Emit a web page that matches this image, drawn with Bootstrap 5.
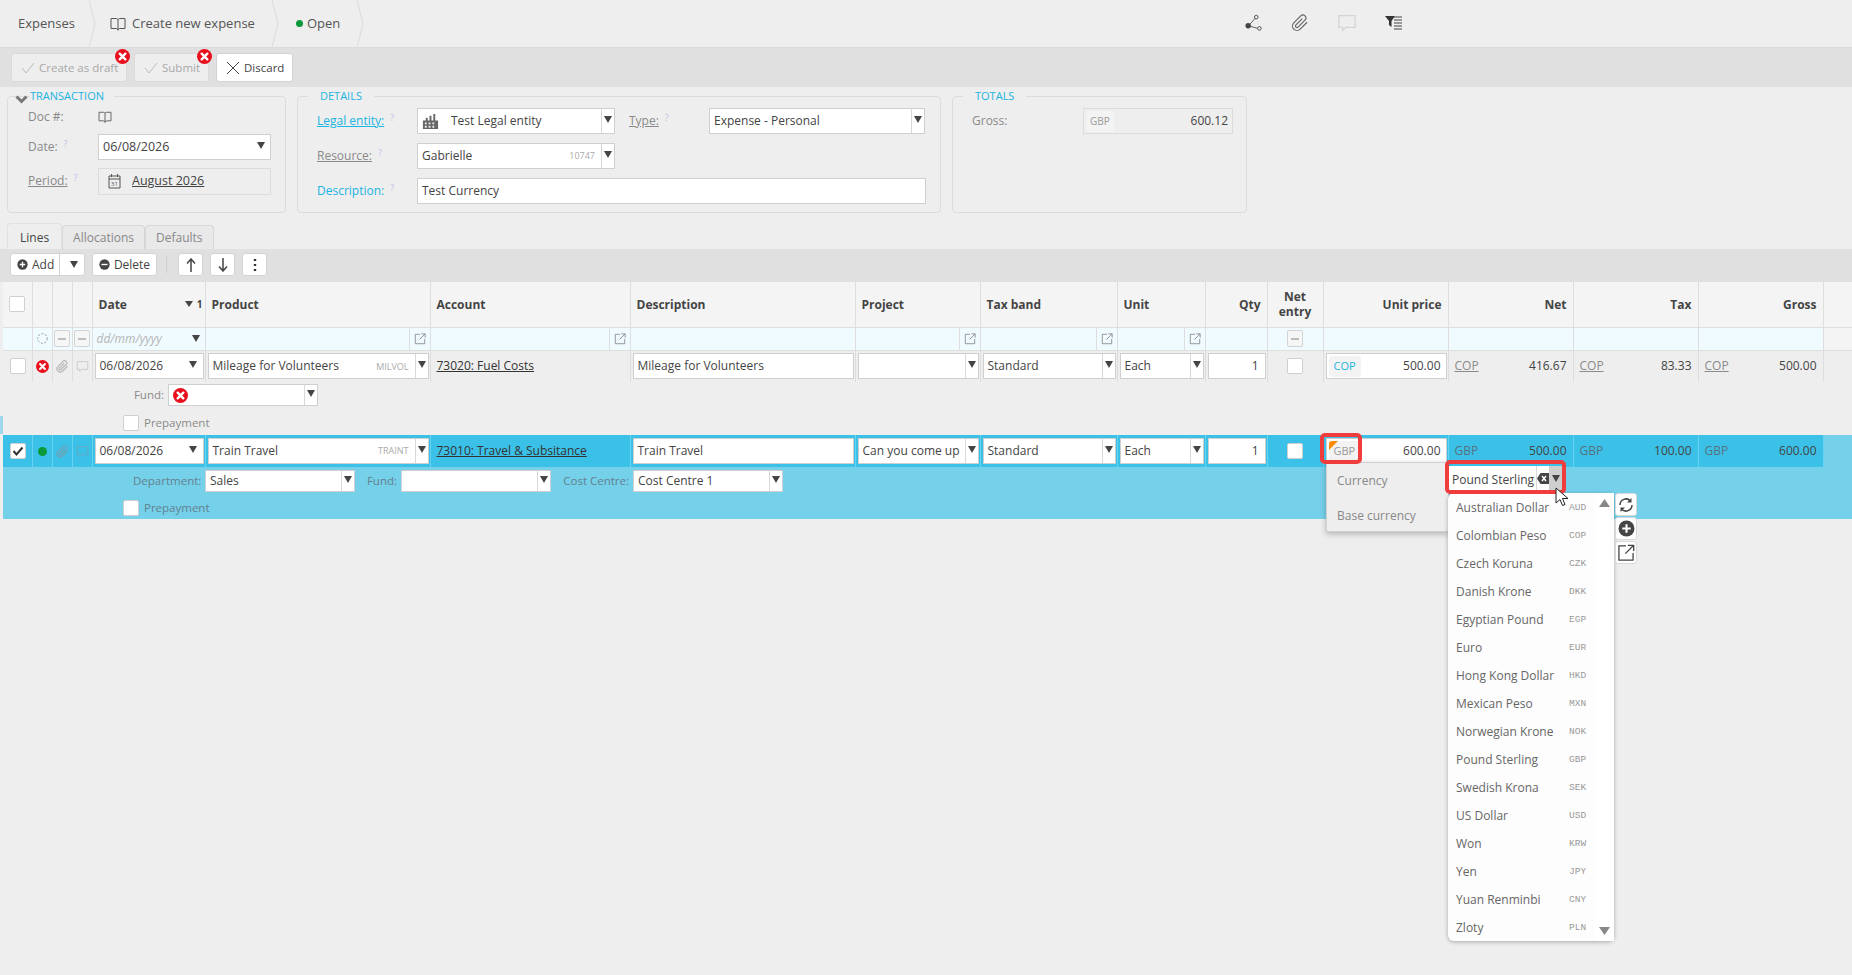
<!DOCTYPE html>
<html lang="en">
<head>
<meta charset="UTF-8">
<title>Create new expense</title>
<link href="https://cdn.jsdelivr.net/npm/bootstrap@5.3.0/dist/css/bootstrap.min.css" rel="stylesheet">
<script src="https://cdn.jsdelivr.net/npm/bootstrap@5.3.0/dist/js/bootstrap.bundle.min.js"></script>
<style>
html, body { height: 975px; overflow: hidden; }
body { background: #eeeeee; color: #444; font-family: "Open Sans", "Noto Sans", sans-serif; font-size: 12px; }
.pg { position: relative; width: 1852px; height: 975px; overflow: hidden; }
.ico { display: inline-block; flex: none; }
.tri { display: inline-block; width: 0; height: 0; border-left: 4px solid transparent; border-right: 4px solid transparent; border-top: 7px solid #444; }
.clip-top { stroke-width: 1.600; }
.clip-s { stroke-width: 2.500; }

/* top crumb bar */
.crumbs { height: 47px; padding-left: 2px; }
.crumb { font-size: 13px; color: #555; display: flex; align-items: center; gap: 6px; }
.crumb-sep { display: block; flex: none; }
.topicons { position: absolute; top: 13px; left: 1245px; display: flex; gap: 28px; }
.topicons svg { display: block; }

/* toolbars */
.bar1 { height: 40px; background: #e0e0e0; border-top: 1px solid #dcdcdc; padding: 5px 0 0 11px; gap: 7px; }
.tbtn { position: relative; display: flex; align-items: center; gap: 4px; height: 29px; padding: 0 0 0 9px; background: #fff; border: 1px solid #d2d2d2; border-radius: 3px; font-size: 11.500px; color: #444; }
.tbtn.off { background: #eeeeee; border-color: #dadada; color: #a8a8a8; }
.errdot { position: absolute; top: -5px; right: -4px; }

/* fieldsets */
.boxes { padding-left: 7px; margin-top: 1px; gap: 11px; }
.fbox { position: relative; height: 125px; border: 1px solid #dcdcdc; border-radius: 4px; min-width: 0; padding: 0; }
.fbox legend { float: none; width: auto; font-size: 11px; line-height: 16px; color: #1cb4e2; margin: 0 0 0 10px; padding: 0 12px; text-transform: uppercase; }
.fbox.t1 { width: 279px; } .fbox.t1 legend { margin-left: 22px; padding: 0 10px 0 0; }
.fbox.t2 { width: 644px; }
.fbox.t3 { width: 295px; }
.fin { padding: 4px 0 0 19px; }
.foldmark { position: absolute; top: -9px; left: 7px; }
.frow { display: flex; align-items: center; height: 26px; }
.frow.gapd { margin-top: 9px; }
.flab { color: #8a8a8a; font-size: 12px; flex: none; }
.flab.act { color: #1cb4e2; }
.flab.blue { color: #1cb4e2; }
.flab sup { color: #cdb8e6; font-size: 9px; margin-left: 6px; }
.fld { display: flex; align-items: center; height: 26px; background: #fff; border: 1px solid #cfcfcf; color: #444; font-size: 12px; min-width: 0; }
.fld.ro { background: #eeeeee; border-color: #dcdcdc; }
.fld.big { font-size: 12.500px; }
.fld-tx { flex: 1 1 auto; padding-left: 4px; white-space: nowrap; overflow: hidden; min-width: 0; }
.fld-code { font-size: 9px; color: #aaa; padding-right: 6px; flex: none; }
.fld-drop { flex: none; width: 13px; align-self: stretch; border-left: 1px solid #d8d8d8; display: flex; align-items: center; justify-content: center; }
.fld-drop.bare { border-left: 0; width: 19px; }
.fld-drop .tri { margin-top: -3px; }
.moneytag { font-size: 10px; color: #999; background: #f3f3f3; border-radius: 3px; padding: 3px 4px; margin-left: 2px; }

/* tabs */
.tabs { margin-top: 9px; padding-left: 7px; height: 27px; border-bottom: 1px solid #d6d6d6; align-items: flex-end; }
.tabs .nav-link { height: 24px; padding: 0 10px; margin: 0; line-height: 24px; font-size: 12px; color: #888; background: #e9e9e9; border: 1px solid #d6d6d6; border-bottom: 0; border-radius: 4px 4px 0 0; }
.tabs .nav-link.active { height: 26px; line-height: 27px; padding: 0 12px; color: #444; background: #eeeeee; }
.bar2 { height: 33px; background: #e0e0e0; padding: 4px 0 0 10px; }
.mbtn { display: flex; align-items: center; justify-content: center; gap: 4px; height: 23px; background: #fff; border: 1px solid #d2d2d2; border-radius: 3px; font-size: 12px; color: #444; padding: 0; }
.vline { width: 1px; height: 17px; background: #cfcfcf; margin: 3px 0 0 9px; }

/* grid */
.ln-grid { --bs-table-bg: transparent; --bs-table-color: #444; width: 1849px; margin: 0 0 0 3px; table-layout: fixed; border-collapse: collapse; }
.ln-grid td, .ln-grid th { padding: 0; border: 0; vertical-align: middle; font-size: 12px; }
.hd-row th { height: 45px; background: #f4f4f4; font-weight: 700; color: #444; padding: 0 6px; border-right: 1px solid #dedede; border-bottom: 1px solid #dedede; line-height: 15px; }
.sorty { margin-right: -4px; }
.flt-row td { height: 23px; background: #effbff; border-right: 1px solid #dedede; border-bottom: 1px solid #dedede; }
.flt-row td:last-child { background: #f4f4f4; border-right: 0; }
.hd-row th:last-child { border-right: 0; }
.flt-cell { display: flex; align-items: center; justify-content: flex-end; height: 22px; }
.flt-btn { width: 21px; height: 22px; border-left: 1px solid #dedede; display: flex; align-items: center; justify-content: center; }
.ph { color: #b5b5b5; font-style: italic; padding-left: 4px; margin-right: auto; }
.dashbox { width: 16px; height: 17px; border: 1px solid #d4d4d4; border-radius: 2px; background: #f6f6f6; display: block; margin: 0 auto; position: relative; }
.dashbox::after { content: ""; position: absolute; left: 3px; right: 3px; top: 7px; height: 2px; background: #bdbdbd; }
.tick { display: block; width: 16px; height: 16px; background: #fff; border: 1px solid #cfcfcf; border-radius: 2px; margin: 0 auto; }
.line-row td { height: 32px; border-right: 1px solid #dedede; }
.line-row td:last-child { border-right: 0; }
.line-row td:first-child .tick { margin-left: 7px; }
.line-row.sel td { background: #3bc1e8; border-right-color: #66d2ef; }
.line-row.sel td:last-child { background: #75d0ea; }
.sub-row td.sub-cell { height: 53px; padding-top: 2px; }
.sub-row.sel td.sub-cell { background: #75d0ea; height: 52px; padding-top: 3px; }
.cellfld { margin: 0 1px 0 2px; }
.cico { display: flex; justify-content: center; align-items: center; }
.alink { color: #333; text-decoration: underline; padding-left: 6px; }
.amt { display: flex; justify-content: space-between; padding: 0 6px; }
.amt u { color: #8a8a8a; }
.sel .amt span:first-child { color: #55737f; }
.qty { justify-content: flex-end; padding-right: 6px; }
.subline { display: flex; align-items: center; height: 22px; gap: 4px; padding-left: 130px; }
.subline .flab { text-align: right; font-size: 11.500px; white-space: nowrap; }
.subfld { height: 22px; width: 150px; }
.lab-fund0 { width: 31px; }
.lab-dept { width: 68px; }
.lab-fund { width: 34px; margin-left: 4px; }
.lab-cost { width: 70px; margin-left: 4px; }
.subline.opt { height: 16px; margin-top: 9px; padding-left: 120px; gap: 5px; }
.sel .subline.opt { margin-top: 8px; }
.sel .flab { color: #63818e; }
.badge-tag { font-size: 11px; background: #f3f3f3; color: #1cb4e2; border-radius: 3px; padding: 2px 5px; margin-left: 2px; position: relative; }
.sel .badge-tag { color: #999; overflow: hidden; }
.sel .badge-tag::before { content: ""; position: absolute; left: 0; top: 0; border-top: 9px solid #ff8a00; border-right: 9px solid transparent; }
.price-tx { margin-left: auto; padding-right: 5px; }

/* popup over the grid */
.cur-pop { position: absolute; left: 1326px; top: 462px; width: 123px; height: 70px; background: #eeeeee; border: 1px solid #d0d0d0; box-shadow: 0 2px 6px rgba(0,0,0,.25); padding: 9px 10px; color: #888; }
.cur-pop div { height: 35px; }
.cur-fld { position: absolute; left: 1448px; top: 466px; width: 114px; height: 25px; background: #fff; display: flex; align-items: center; }
.cur-fld .tx { flex: 1; padding: 2px 0 0 4px; font-size: 12px; color: #444; white-space: nowrap; overflow: hidden; }
.cur-x { flex: none; width: 13px; height: 25px; border-left: 1px solid #d8d8d8; display: flex; align-items: center; }
.cur-dd { flex: none; width: 13px; height: 25px; background: #cfcfcf; display: flex; align-items: center; justify-content: center; }
.redmark { position: absolute; border: 4px solid #ef3d3d; border-radius: 5px; }
.cur-list { position: absolute; left: 1448px; top: 493px; width: 166px; height: 448px; background: #fdfdfd; box-shadow: 0 1px 4px rgba(0,0,0,.3); padding-top: 1px; }
.cur-list::after { content: ""; position: absolute; top: 0; bottom: 0; right: 0; width: 19px; background: #fff; }
.cur-item { display: flex; height: 28px; align-items: center; padding-left: 8px; font-size: 12px; color: #666; border: 0; background: transparent; border-radius: 0; }
.cur-item span:first-child { width: 113px; white-space: nowrap; }
.cur-item span:last-child { font-family: "Liberation Mono", monospace; font-size: 9.500px; color: #999; margin-top: 1px; }
.scr { position: absolute; right: 4px; z-index: 1; }
.cur-side { position: absolute; left: 1615px; top: 493px; width: 22px; }
.cur-side div { width: 22px; height: 23px; background: #fff; border: 1px solid #d8d8d8; border-radius: 3px; margin-bottom: 1px; display: flex; align-items: center; justify-content: center; }
.cursorm { position: absolute; left: 1555px; top: 487px; }
.edgemark { position: absolute; left: 0; top: 416px; width: 3px; height: 18px; background: #9fd8ea; }
</style>
</head>
<body>
<svg width="0" height="0" class="position-absolute">
  <defs>
    <symbol id="i-book" viewBox="0 0 16 14"><path d="M1 1.500h5c1 0 2 .5 2 1.500 0-1 1-1.500 2-1.500h5v10h-5c-1 0-2 .5-2 1.500 0-1-1-1.500-2-1.500H1zM8 3v10.500" fill="none" stroke="currentColor"/></symbol>
    <symbol id="i-check" viewBox="0 0 14 12"><path d="M1 6l4 5 8-10" fill="none" stroke="currentColor"/></symbol>
    <symbol id="i-x" viewBox="0 0 14 14"><path d="M1 1l12 12M13 1L1 13" fill="none" stroke="currentColor"/></symbol>
    <symbol id="i-err" viewBox="0 0 16 16"><circle cx="8" cy="8" r="8" fill="#e8101c"/><path d="M5 5l6 6M11 5l-6 6" stroke="#fff" stroke-width="2.600" stroke-linecap="round"/></symbol>
    <symbol id="i-clip" viewBox="0 0 24 24"><path d="M21.440 11.050l-9.190 9.190a6 6 0 0 1-8.490-8.490l9.190-9.190a4 4 0 0 1 5.660 5.660l-9.200 9.190a2 2 0 0 1-2.830-2.830l8.490-8.480" fill="none" stroke="currentColor"/></symbol>
    <symbol id="i-note" viewBox="0 0 16 16"><path d="M1.500 2h13v9.500H7L4.500 14v-2.500h-3z" fill="none" stroke="currentColor"/></symbol>
    <symbol id="i-out" viewBox="0 0 14 14"><path d="M7 1.500H1.500v11h11V7M8.500 1h4.500v4.500M13 1L6.500 7.500" fill="none" stroke="currentColor"/></symbol>
    <symbol id="i-plus" viewBox="0 0 16 16"><circle cx="8" cy="8" r="7.500" fill="#444"/><path d="M8 4v8M4 8h8" stroke="#fff" stroke-width="2"/></symbol>
    <symbol id="i-minus" viewBox="0 0 16 16"><circle cx="8" cy="8" r="7.500" fill="#444"/><path d="M3.500 8h9" stroke="#fff" stroke-width="2"/></symbol>
    <symbol id="i-scale" viewBox="0 0 18 18"><path d="M1 17V8h3V5h2v3h2V3h2v5h2V1h2v7h3v9z" fill="#666"/><path d="M3 10h2v2H3zM7 10h2v2H7zM11 10h2v2h-2zM3 13.500h2v2H3zM7 13.500h2v2H7zM11 13.500h2v2h-2z" fill="#eee"/></symbol>
  </defs>
</svg>

<div class="pg">
  <div class="crumbs d-flex">
    <div class="crumb" style="width:87px;padding-left:16px">Expenses</div>
    <svg class="crumb-sep" width="7" height="47"><path d="M0 0l6 23.500L0 47" fill="none" stroke="#dadada"/></svg>
    <div class="crumb" style="width:176px;padding-left:14px"><svg class="ico" width="16" height="14"><use href="#i-book"/></svg>Create new expense</div>
    <svg class="crumb-sep" width="7" height="47"><path d="M0 0l6 23.500L0 47" fill="none" stroke="#dadada"/></svg>
    <div class="crumb" style="width:78px;padding-left:17px;gap:4px"><svg class="ico" width="7" height="7"><circle cx="3.500" cy="3.500" r="3.500" fill="#0a9a3a"/></svg>Open</div>
    <svg class="crumb-sep" width="7" height="47"><path d="M0 0l6 23.500L0 47" fill="none" stroke="#dadada"/></svg>
  </div>
  <div class="topicons">
    <svg width="18" height="20" viewBox="0 0 20 20"><path d="M4 13l8-9M4 13l10 3" stroke="#555" fill="none"/><circle cx="3.500" cy="13" r="3" fill="#444"/><circle cx="12.500" cy="3.500" r="2" fill="#eee" stroke="#444"/><circle cx="16" cy="16" r="2" fill="#eee" stroke="#444"/></svg>
    <svg width="18" height="18" class="clip-top" style="color:#666;margin-top:1px"><use href="#i-clip"/></svg>
    <svg width="20" height="20" style="color:#d4d4d4"><use href="#i-note"/></svg>
    <svg width="18" height="20" viewBox="0 0 18 20"><path d="M0 3h10L6.500 8v6L4 12V8z" fill="#333"/><path d="M9 4h8M9 7h8M9 10h8M9 13h8M9 16h8" stroke="#444" stroke-width="1.200"/></svg>
  </div>

  <div class="bar1 d-flex">
    <button type="button" class="tbtn off" style="width:116px"><svg class="ico" width="14" height="12" style="color:#bbb"><use href="#i-check"/></svg>Create as draft<svg class="errdot" width="15" height="15"><use href="#i-err"/></svg></button>
    <button type="button" class="tbtn off" style="width:75px"><svg class="ico" width="14" height="12" style="color:#bbb"><use href="#i-check"/></svg>Submit<svg class="errdot" width="15" height="15"><use href="#i-err"/></svg></button>
    <button type="button" class="tbtn" style="width:77px"><svg class="ico" width="14" height="14" style="color:#444"><use href="#i-x"/></svg>Discard</button>
  </div>

  <div class="boxes d-flex">
    <fieldset class="fbox t1">
      <legend>Transaction</legend>
      <svg class="foldmark" width="13" height="9" viewBox="0 0 13 9"><path d="M1.500 1.500l5 5 5-5" fill="none" stroke="#777" stroke-width="3"/></svg>
      <div class="frow" style="padding-left:20px">
        <span class="flab" style="width:70px">Doc #:</span>
        <svg class="ico" width="14" height="12" style="color:#555"><use href="#i-book"/></svg>
      </div>
      <div class="frow mt-1" style="padding-left:20px">
        <span class="flab" style="width:70px">Date:<sup>?</sup></span>
        <div class="fld big" style="width:173px"><span class="fld-tx">06/08/2026</span><span class="fld-drop bare"><i class="tri"></i></span></div>
      </div>
      <div class="frow mt-2" style="padding-left:20px">
        <span class="flab" style="width:70px"><u>Period:</u><sup>?</sup></span>
        <div class="fld ro big" style="width:173px;height:27px;padding-left:9px;gap:11px">
          <svg class="ico" width="13" height="16" viewBox="0 0 13 16"><path d="M1 3h11v12H1zM1 6h11M3.500 1v3M9.500 1v3" fill="none" stroke="#555"/><text x="6.500" y="13" font-size="6" text-anchor="middle" fill="#555">31</text></svg>
          <u>August 2026</u>
        </div>
      </div>
    </fieldset>
    <fieldset class="fbox t2">
      <legend>Details</legend>
      <div class="fin">
        <div class="frow">
          <span class="flab act" style="width:100px"><u>Legal entity:</u><sup>?</sup></span>
          <div class="fld" style="width:198px"><svg class="ico ms-1" width="17" height="17"><use href="#i-scale"/></svg><span class="fld-tx ms-2">Test Legal entity</span><span class="fld-drop"><i class="tri"></i></span></div>
          <span class="flab" style="margin-left:14px;width:80px"><u>Type:</u><sup>?</sup></span>
          <div class="fld" style="width:216px"><span class="fld-tx">Expense - Personal</span><span class="fld-drop"><i class="tri"></i></span></div>
        </div>
        <div class="frow gapd">
          <span class="flab" style="width:100px"><u>Resource:</u><sup>?</sup></span>
          <div class="fld" style="width:198px"><span class="fld-tx">Gabrielle</span><span class="fld-code">10747</span><span class="fld-drop"><i class="tri"></i></span></div>
        </div>
        <div class="frow gapd">
          <span class="flab blue" style="width:100px">Description:<sup>?</sup></span>
          <div class="fld" style="width:509px"><span class="fld-tx">Test Currency</span></div>
        </div>
      </div>
    </fieldset>
    <fieldset class="fbox t3">
      <legend>Totals</legend>
      <div class="fin">
        <div class="frow">
          <span class="flab" style="width:111px">Gross:</span>
          <div class="fld ro" style="width:150px"><span class="moneytag">GBP</span><span class="ms-auto pe-1">600.12</span></div>
        </div>
      </div>
    </fieldset>
  </div>

  <ul class="nav nav-tabs tabs border-0 d-flex">
    <li class="nav-item"><a class="nav-link active" href="#">Lines</a></li>
    <li class="nav-item"><a class="nav-link" href="#">Allocations</a></li>
    <li class="nav-item"><a class="nav-link" href="#">Defaults</a></li>
  </ul>

  <div class="bar2 d-flex">
    <div class="mbtn" style="width:75px;justify-content:flex-start">
      <span class="d-flex align-items-center gap-1" style="width:50px;padding-left:6px;border-right:1px solid #d2d2d2;height:21px"><svg class="ico" width="11" height="11"><use href="#i-plus"/></svg>Add</span>
      <span class="d-flex justify-content-center" style="width:20px"><i class="tri"></i></span>
    </div>
    <div class="mbtn" style="width:65px;margin-left:7px"><svg class="ico" width="11" height="11"><use href="#i-minus"/></svg>Delete</div>
    <div class="vline"></div>
    <div class="mbtn" style="width:25px;margin-left:11px"><svg width="10" height="14" viewBox="0 0 10 14"><path d="M5 14V2M1 5.500L5 1l4 4.500" fill="none" stroke="#444" stroke-width="1.500"/></svg></div>
    <div class="mbtn" style="width:25px;margin-left:7px"><svg width="10" height="14" viewBox="0 0 10 14"><path d="M5 0v12M1 8.500L5 13l4-4.500" fill="none" stroke="#444" stroke-width="1.500"/></svg></div>
    <div class="mbtn" style="width:25px;margin-left:7px"><svg width="4" height="14" viewBox="0 0 4 14"><path d="M2 1v2M2 6v2M2 11v2" stroke="#333" stroke-width="2.400"/></svg></div>
  </div>

  <table class="table ln-grid">
    <colgroup>
      <col style="width:29px"><col style="width:20px"><col style="width:20px"><col style="width:20px"><col style="width:113px"><col style="width:225px"><col style="width:200px"><col style="width:225px"><col style="width:125px"><col style="width:137px"><col style="width:88px"><col style="width:62px"><col style="width:56px"><col style="width:125px"><col style="width:125px"><col style="width:125px"><col style="width:125px"><col style="width:29px">
    </colgroup>
    <thead>
      <tr class="hd-row">
        <th><i class="tick"></i></th><th></th><th></th><th></th>
        <th><div class="d-flex align-items-center"><span>Date</span><i class="tri ms-auto" style="border-top-width:6px"></i><span class="ms-1 sorty" style="font-size:10px">1</span></div></th>
        <th>Product</th><th>Account</th><th>Description</th><th>Project</th><th>Tax band</th><th>Unit</th>
        <th class="text-end">Qty</th><th class="text-center">Net<br>entry</th><th class="text-end">Unit price</th>
        <th class="text-end">Net</th><th class="text-end">Tax</th><th class="text-end">Gross</th><th></th>
      </tr>
    </thead>
    <tbody>
      <tr class="flt-row">
        <td></td>
        <td><svg class="d-block mx-auto" width="11" height="11"><circle cx="5.500" cy="5.500" r="4.800" fill="none" stroke="#999" stroke-dasharray="2 1.500"/></svg></td>
        <td><i class="dashbox"></i></td><td><i class="dashbox"></i></td>
        <td><div class="flt-cell"><span class="ph">dd/mm/yyyy</span><i class="tri" style="margin-right:5px"></i></div></td>
        <td><div class="flt-cell"><span class="flt-btn"><svg width="12" height="12" style="color:#888"><use href="#i-out"/></svg></span></div></td>
        <td><div class="flt-cell"><span class="flt-btn"><svg width="12" height="12" style="color:#888"><use href="#i-out"/></svg></span></div></td>
        <td></td>
        <td><div class="flt-cell"><span class="flt-btn"><svg width="12" height="12" style="color:#888"><use href="#i-out"/></svg></span></div></td>
        <td><div class="flt-cell"><span class="flt-btn"><svg width="12" height="12" style="color:#888"><use href="#i-out"/></svg></span></div></td>
        <td><div class="flt-cell"><span class="flt-btn"><svg width="12" height="12" style="color:#888"><use href="#i-out"/></svg></span></div></td>
        <td></td>
        <td><i class="dashbox"></i></td>
        <td></td><td></td><td></td><td></td><td></td>
      </tr>

      <tr class="line-row">
        <td><i class="tick"></i></td>
        <td><div class="cico"><svg width="13" height="13"><use href="#i-err"/></svg></div></td>
        <td><div class="cico"><svg width="13" height="13" class="clip-s" style="color:#bbb"><use href="#i-clip"/></svg></div></td>
        <td><div class="cico"><svg width="13" height="13" style="color:#c4c4c4"><use href="#i-note"/></svg></div></td>
        <td><div class="fld cellfld"><span class="fld-tx">06/08/2026</span><span class="fld-drop bare"><i class="tri"></i></span></div></td>
        <td><div class="fld cellfld"><span class="fld-tx">Mileage for Volunteers</span><span class="fld-code">MILVOL</span><span class="fld-drop"><i class="tri"></i></span></div></td>
        <td><span class="alink">73020: Fuel Costs</span></td>
        <td><div class="fld cellfld"><span class="fld-tx">Mileage for Volunteers</span></div></td>
        <td><div class="fld cellfld"><span class="fld-tx"></span><span class="fld-drop"><i class="tri"></i></span></div></td>
        <td><div class="fld cellfld"><span class="fld-tx">Standard</span><span class="fld-drop"><i class="tri"></i></span></div></td>
        <td><div class="fld cellfld"><span class="fld-tx">Each</span><span class="fld-drop"><i class="tri"></i></span></div></td>
        <td><div class="fld cellfld qty">1</div></td>
        <td><i class="tick"></i></td>
        <td><div class="fld cellfld"><span class="badge-tag">COP</span><span class="price-tx">500.00</span></div></td>
        <td><div class="amt"><u>COP</u><span>416.67</span></div></td>
        <td><div class="amt"><u>COP</u><span>83.33</span></div></td>
        <td><div class="amt"><u>COP</u><span>500.00</span></div></td>
        <td></td>
      </tr>
      <tr class="sub-row">
        <td colspan="18" class="sub-cell align-top">
          <div class="subline">
            <span class="flab lab-fund0">Fund:</span>
            <div class="fld subfld"><svg class="ico ms-1" width="15" height="15"><use href="#i-err"/></svg><span class="fld-tx"></span><span class="fld-drop"><i class="tri"></i></span></div>
          </div>
          <div class="subline opt"><i class="tick m-0"></i><span class="flab">Prepayment</span></div>
        </td>
      </tr>

      <tr class="line-row sel">
        <td><i class="tick text-center"><svg class="d-block" width="14" height="14" viewBox="0 0 14 14"><path d="M2.500 7l3 3.500 6-7" fill="none" stroke="#333" stroke-width="2"/></svg></i></td>
        <td><div class="cico"><svg width="9" height="9"><circle cx="4.500" cy="4.500" r="4.500" fill="#0a9a3a"/></svg></div></td>
        <td><div class="cico"><svg width="13" height="13" class="clip-s" style="color:#6aa5b8"><use href="#i-clip"/></svg></div></td>
        <td><div class="cico"><svg width="13" height="13" style="color:#6aa5b8"><use href="#i-note"/></svg></div></td>
        <td><div class="fld cellfld"><span class="fld-tx">06/08/2026</span><span class="fld-drop bare"><i class="tri"></i></span></div></td>
        <td><div class="fld cellfld"><span class="fld-tx">Train Travel</span><span class="fld-code">TRAINT</span><span class="fld-drop"><i class="tri"></i></span></div></td>
        <td><span class="alink">73010: Travel &amp; Subsitance</span></td>
        <td><div class="fld cellfld"><span class="fld-tx">Train Travel</span></div></td>
        <td><div class="fld cellfld"><span class="fld-tx">Can you come up</span><span class="fld-drop"><i class="tri"></i></span></div></td>
        <td><div class="fld cellfld"><span class="fld-tx">Standard</span><span class="fld-drop"><i class="tri"></i></span></div></td>
        <td><div class="fld cellfld"><span class="fld-tx">Each</span><span class="fld-drop"><i class="tri"></i></span></div></td>
        <td><div class="fld cellfld qty">1</div></td>
        <td><i class="tick"></i></td>
        <td><div class="fld cellfld"><span class="badge-tag">GBP</span><span class="price-tx">600.00</span></div></td>
        <td><div class="amt"><span>GBP</span><span>500.00</span></div></td>
        <td><div class="amt"><span>GBP</span><span>100.00</span></div></td>
        <td><div class="amt"><span>GBP</span><span>600.00</span></div></td>
        <td></td>
      </tr>
      <tr class="sub-row sel">
        <td colspan="18" class="sub-cell align-top">
          <div class="subline">
            <span class="flab lab-dept">Department:</span>
            <div class="fld subfld"><span class="fld-tx">Sales</span><span class="fld-drop"><i class="tri"></i></span></div>
            <span class="flab lab-fund">Fund:</span>
            <div class="fld subfld"><span class="fld-tx"></span><span class="fld-drop"><i class="tri"></i></span></div>
            <span class="flab lab-cost">Cost Centre:</span>
            <div class="fld subfld"><span class="fld-tx">Cost Centre 1</span><span class="fld-drop"><i class="tri"></i></span></div>
          </div>
          <div class="subline opt"><i class="tick m-0"></i><span class="flab">Prepayment</span></div>
        </td>
      </tr>
    </tbody>
  </table>

  <div class="edgemark"></div>

  <div class="cur-pop"><div>Currency</div><div>Base currency</div></div>
  <div class="cur-fld">
    <span class="tx">Pound Sterling</span>
    <span class="cur-x"><svg width="12" height="11" viewBox="0 0 12 11"><path d="M3.500 0H12v11H3.500L0 5.500z" fill="#444"/><path d="M5 3l4 5M9 3L5 8" stroke="#fff" stroke-width="1.500"/></svg></span>
    <span class="cur-dd"><i class="tri"></i></span>
  </div>
  <div class="cur-list list-group">
    <svg class="scr" style="top:6px" width="11" height="8"><path d="M5.500 0L11 8H0z" fill="#888"/></svg>
    <svg class="scr" style="bottom:6px" width="11" height="8"><path d="M5.500 8L11 0H0z" fill="#888"/></svg>
    <div class="cur-item list-group-item"><span>Australian Dollar</span><span>AUD</span></div>
    <div class="cur-item list-group-item"><span>Colombian Peso</span><span>COP</span></div>
    <div class="cur-item list-group-item"><span>Czech Koruna</span><span>CZK</span></div>
    <div class="cur-item list-group-item"><span>Danish Krone</span><span>DKK</span></div>
    <div class="cur-item list-group-item"><span>Egyptian Pound</span><span>EGP</span></div>
    <div class="cur-item list-group-item"><span>Euro</span><span>EUR</span></div>
    <div class="cur-item list-group-item"><span>Hong Kong Dollar</span><span>HKD</span></div>
    <div class="cur-item list-group-item"><span>Mexican Peso</span><span>MXN</span></div>
    <div class="cur-item list-group-item"><span>Norwegian Krone</span><span>NOK</span></div>
    <div class="cur-item list-group-item"><span>Pound Sterling</span><span>GBP</span></div>
    <div class="cur-item list-group-item"><span>Swedish Krona</span><span>SEK</span></div>
    <div class="cur-item list-group-item"><span>US Dollar</span><span>USD</span></div>
    <div class="cur-item list-group-item"><span>Won</span><span>KRW</span></div>
    <div class="cur-item list-group-item"><span>Yen</span><span>JPY</span></div>
    <div class="cur-item list-group-item"><span>Yuan Renminbi</span><span>CNY</span></div>
    <div class="cur-item list-group-item"><span>Zloty</span><span>PLN</span></div>
  </div>
  <div class="cur-side">
    <div><svg width="16" height="16" viewBox="0 0 16 16"><path d="M2 8a6 6 0 0 1 10.500-4M14 8a6 6 0 0 1-10.500 4" fill="none" stroke="#444" stroke-width="1.500"/><path d="M13.500 1v4.500H9M2.500 15v-4.500H7" fill="#444"/></svg></div>
    <div><svg width="17" height="17"><use href="#i-plus"/></svg></div>
    <div><svg width="18" height="18" style="color:#444"><use href="#i-out"/></svg></div>
  </div>
  <div class="redmark" style="left:1320px;top:433px;width:42px;height:31px"></div>
  <div class="redmark" style="left:1445px;top:460px;width:121px;height:34px"></div>
  <svg class="cursorm" width="14" height="20" viewBox="0 0 14 20"><path d="M1 1v15l4-3.500 2.500 6 2.500-1-2.500-6H13z" fill="#fff" stroke="#222"/></svg>
</div>
</body>
</html>
